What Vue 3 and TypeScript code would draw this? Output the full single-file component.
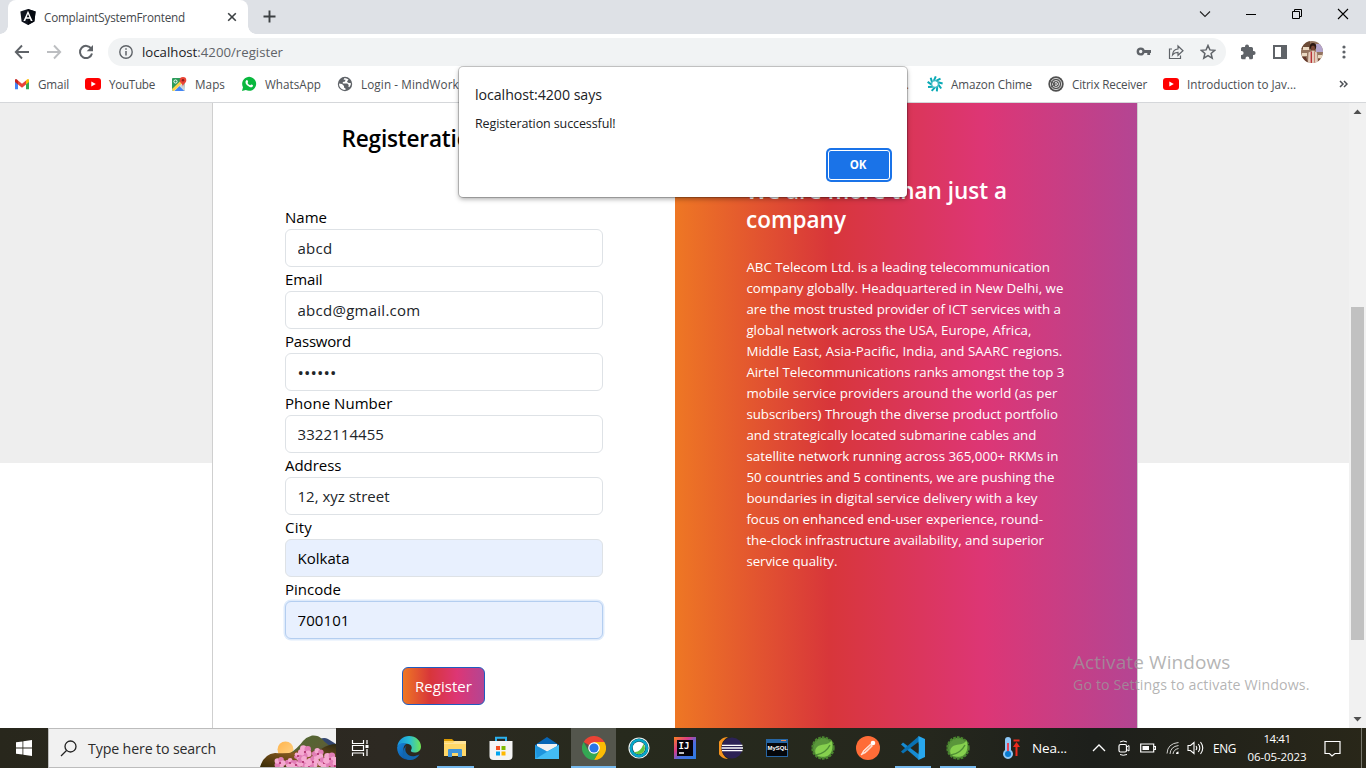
<script setup lang="ts">
import type { Directive } from 'vue'

/** Spreads the letters of a label or input value over the given width in pixels. */
const vFit: Directive<HTMLElement, number> = {
  mounted(el, binding) {
    let width: number
    let count: number
    if (el instanceof HTMLInputElement) {
      const ctx = document.createElement('canvas').getContext('2d')!
      const cs = getComputedStyle(el)
      ctx.font = `${cs.fontWeight} ${cs.fontSize} ${cs.fontFamily}`
      const shown = el.type === 'password' ? '•'.repeat(el.value.length) : el.value
      width = ctx.measureText(shown).width
      count = shown.length
    } else {
      width = el.getBoundingClientRect().width
      count = (el.textContent ?? '').length
    }
    el.style.letterSpacing = `${((binding.value - width) / count).toFixed(3)}px`
  },
}

interface Field {
  label: string
  labelWidth: number
  value: string
  width: number
  type?: string
  state?: string
}

const fields: Field[] = [
  { label: 'Name', labelWidth: 42, value: 'abcd', width: 35 },
  { label: 'Email', labelWidth: 37.5, value: 'abcd@gmail.com', width: 123 },
  { label: 'Password', labelWidth: 66, value: 'secret', width: 39, type: 'password' },
  { label: 'Phone Number', labelWidth: 107.5, value: '3322114455', width: 86.5 },
  { label: 'Address', labelWidth: 56.5, value: '12, xyz street', width: 92 },
  { label: 'City', labelWidth: 27, value: 'Kolkata', width: 52, state: 'filled' },
  { label: 'Pincode', labelWidth: 56, value: '700101', width: 52, state: 'filled focused' },
]

const about: [string, number][] = [
  ['ABC Telecom Ltd. is a leading telecommunication', 303.5],
  ['company globally. Headquartered in New Delhi, we', 317],
  ['are the most trusted provider of ICT services with a', 314.5],
  ['global network across the USA, Europe, Africa,', 285],
  ['Middle East, Asia-Pacific, India, and SAARC regions.', 316],
  ['Airtel Telecommunications ranks amongst the top 3', 318],
  ['mobile service providers around the world (as per', 311],
  ['subscribers) Through the diverse product portfolio', 311.5],
  ['and strategically located submarine cables and', 290],
  ['satellite network running across 365,000+ RKMs in', 312],
  ['50 countries and 5 continents, we are pushing the', 308],
  ['boundaries in digital service delivery with a key', 291],
  ['focus on enhanced end-user experience, round-', 296.5],
  ['the-clock infrastructure availability, and superior', 297.5],
  ['service quality.', 91],
]

/** Blossoms of the search box scene: centre x, centre y, radius. */
const blossoms: [number, number, number][] = [
  [20, 28, 6], [30, 28, 5], [36, 30, 5], [45, 17, 7], [38, 21, 4], [43, 27, 6],
  [53, 27, 6], [58, 19, 6], [64, 28, 6], [70, 24, 7], [49, 32, 5], [75, 31, 5],
]
</script>

<template>
  <div class="desktop">
    <header class="tabstrip">
      <div class="tab">
        <svg width="16" height="16" viewBox="0 0 16 16"><path d="M8 0l7.6 2.6-1.2 10L8 16l-6.4-3.4-1.2-10z" fill="#10151f" /><path d="M8 0l7.6 2.6-1.2 10L8 16z" fill="#050910" /><path d="M8 1.8L3.4 12h1.8l.9-2.3h3.8l.9 2.3h1.8zM6.7 8.2L8 5.1l1.3 3.1z" fill="#fff" /></svg>
        <span v-fit="141" class="tab-title">ComplaintSystemFrontend</span>
        <svg class="tab-close" width="10" height="10" viewBox="0 0 10 10"><path d="M1.200 1.200l7.600 7.600M8.800 1.200L1.200 8.800" stroke="#3c4043" stroke-width="1.600" /></svg>
      </div>
      <svg class="new-tab" width="13" height="13" viewBox="0 0 13 13"><path d="M6.5.5v12M.5 6.5h12" stroke="#3c4043" stroke-width="1.9" /></svg>
      <div class="window-buttons">
        <svg width="46" height="28" viewBox="0 0 46 28"><path d="M18 11.5l5 5 5-5" fill="none" stroke="#222" stroke-width="1.1" /></svg>
        <svg width="46" height="28" viewBox="0 0 46 28"><path d="M18 14.5h10" stroke="#000" /></svg>
        <svg width="46" height="28" viewBox="0 0 46 28"><path d="M18.500 11.500h7v7h-7zM20.500 11.500v-2h7v7h-2" fill="none" stroke="#000" /></svg>
        <svg width="46" height="28" viewBox="0 0 46 28"><path d="M18 9l10 10M28 9L18 19" stroke="#000" stroke-width="1.1" /></svg>
      </div>
    </header>

    <nav class="toolbar">
      <svg class="nav" width="16" height="16" viewBox="0 0 16 16"><path d="M15 8H2.500M8 1.500L1.800 8 8 14.500" fill="none" stroke="#5f6368" stroke-width="1.9" /></svg>
      <svg class="nav" width="16" height="16" viewBox="0 0 16 16"><path d="M1 8h12.500M8 1.500L14.200 8 8 14.500" fill="none" stroke="#bcbec1" stroke-width="1.9" /></svg>
      <svg class="nav" width="16" height="16" viewBox="0 0 16 16"><path d="M13.300 4.800A6.100 6.100 0 1 0 14 9.500" fill="none" stroke="#5f6368" stroke-width="2" /><path d="M15 1v6.300H8.700z" fill="#5f6368" /></svg>
      <div class="omnibox">
        <svg width="14" height="14" viewBox="0 0 14 14"><circle cx="7" cy="7" r="6.200" fill="none" stroke="#5f6368" stroke-width="1.400" /><path d="M7 6v4.500M7 3.300v1.500" stroke="#5f6368" stroke-width="1.500" /></svg>
        <span v-fit="141" class="url"><b>localhost</b>:4200/register</span>
        <svg class="key" width="16" height="16" viewBox="0 0 16 16"><circle cx="4.700" cy="7.500" r="2.900" fill="none" stroke="#5f6368" stroke-width="2.400" /><path d="M7.500 7.500h7.500M12.700 8v3" stroke="#5f6368" stroke-width="2.800" /></svg>
        <svg width="16" height="16" viewBox="0 0 16 16"><path d="M4 5H1.500v9.500h11V11.500" fill="none" stroke="#5f6368" stroke-width="1.200" /><path d="M4.500 11c.3-4 2.500-5.800 5.500-6V2l5 4.800-5 4.500V8.400C7.500 8.400 6 9 4.500 11z" fill="none" stroke="#5f6368" stroke-width="1.200" /></svg>
        <svg width="16" height="16" viewBox="0 0 16 16"><path d="M8 1.500l1.900 4.400 4.800.4-3.600 3.100 1.100 4.700L8 11.600l-4.200 2.500 1.100-4.700-3.600-3.100 4.800-.4z" fill="none" stroke="#5f6368" stroke-width="1.500" /></svg>
      </div>
      <svg class="puzzle" width="16" height="16" viewBox="0 0 16 16"><path d="M1 4.500q0-1.500 1.500-1.500H5V2.500a2 2 0 0 1 4 0V3h2.500Q13 3 13 4.500V7h.6a2 2 0 0 1 0 4H13v2.700q0 1.500-1.500 1.500H9.300v-.7a1.900 1.900 0 0 0-3.800 0v.7h-3Q1 15.200 1 13.700V11h.6a2 2 0 0 0 0-4H1z" fill="#5f6368" /></svg>
      <svg class="side" width="16" height="16" viewBox="0 0 16 16"><path d="M2 2h12v12H2z" fill="#fff" stroke="#5f6368" stroke-width="2" /><path d="M9 2h5v12H9z" fill="#5f6368" /></svg>
      <svg class="avatar" width="22" height="22" viewBox="0 0 22 22">
        <defs><clipPath id="avatar-clip"><circle cx="11" cy="11" r="11" /></clipPath></defs>
        <g clip-path="url(#avatar-clip)">
          <path d="M0 0h22v22H0z" fill="#94745f" /><path d="M0 0h9v8H0z" fill="#6b4a36" /><path d="M15 3h7v8h-7z" fill="#b4a5cd" /><path d="M2 6h6v3H2zM1 12h5v3H1zM17 14h5v3h-5z" fill="#ead8c1" />
          <ellipse cx="12" cy="5.500" rx="3.200" ry="3.500" fill="#2b1712" /><ellipse cx="12" cy="7" rx="2" ry="2.500" fill="#7c4735" /><path d="M7.500 11.500L12 9.500l4 2 1 11H7z" fill="#e3cdbd" /><path d="M10.300 10.500v12" stroke="#b72730" stroke-width="1.300" /><path d="M13.500 10.500v12" stroke="#c98072" stroke-width="1" /><path d="M0 16h5l2 6H0z" fill="#63372a" /><path d="M17 18h5v4h-5z" fill="#7c4a38" />
        </g>
      </svg>
      <svg class="dots" width="4" height="14" viewBox="0 0 4 14"><g fill="#5f6368"><circle cx="2" cy="2" r="1.600" /><circle cx="2" cy="7" r="1.600" /><circle cx="2" cy="12" r="1.600" /></g></svg>
    </nav>

    <div class="bookmarks">
      <div class="bookmark">
        <svg width="16" height="16" viewBox="0 0 16 16"><path d="M1 4.200v9h3V7z" fill="#4285f4" /><path d="M15 4.200v9h-3V7z" fill="#34a853" /><path d="M12 4.500l1.300-1.300Q15 2.500 15 4.500V6l-3 2.500z" fill="#fbbc04" /><path d="M4 4.500L2.700 3.200Q1 2.500 1 4.500V6l3 2.500z" fill="#c5221f" /><path d="M4 4.500l4 3.200 4-3.200v4l-4 3.200-4-3.200z" fill="#ea4335" /></svg>
        <span v-fit="31">Gmail</span>
      </div>
      <div class="bookmark">
        <svg width="16" height="16" viewBox="0 0 16 16"><rect y="2" width="16" height="12" rx="3" fill="#f00" /><path d="M6.300 5.400v5.200l4.500-2.600z" fill="#fff" /></svg>
        <span v-fit="46">YouTube</span>
      </div>
      <div class="bookmark">
        <svg width="16" height="16" viewBox="0 0 16 16"><rect x="1" y="2" width="13" height="13" rx="1" fill="#2c9c5b" /><path d="M1 14L13 3l1 11q0 1-1 1H2z" fill="#e5e8eb" /><path d="M3.500 15l5-5 5 5z" fill="#4285f4" /><path d="M1 13L12 2.500 13.500 5 3 15H2z" fill="#fdd24a" /><path d="M8.500 10l5 5V7z" fill="#cdd5db" /><circle cx="4.500" cy="5.500" r="1.600" fill="none" stroke="#fff" /><path d="M12 1a3.300 3.300 0 0 1 3.300 3.300C15.300 7 12.300 7.500 12 11c-.3-3.500-3.300-4-3.300-6.700A3.300 3.300 0 0 1 12 1z" fill="#e94335" /><circle cx="12" cy="4.300" r="1.200" fill="#8c1d18" /></svg>
        <span v-fit="30">Maps</span>
      </div>
      <div class="bookmark">
        <svg width="16" height="16" viewBox="0 0 16 16"><path d="M1 15l1-3.800A7 7 0 1 1 4.800 14z" fill="#09b83e" /><path d="M5.300 4.300q.9-.7 1.300.2l.5 1.200q.2.500-.6 1.200 1 1.800 2.700 2.400.8-1 1.200-.9l1.400.7q.5.500-.3 1.600-1 1-2.900.3Q5.500 9.700 4.600 7.200q-.5-1.900.7-2.900z" fill="#fff" /></svg>
        <span v-fit="56">WhatsApp</span>
      </div>
      <div class="bookmark login">
        <svg width="16" height="16" viewBox="0 0 16 16"><circle cx="8" cy="8" r="7.200" fill="#5f6368" /><path d="M2 7.500l3 .5 2 2v1.500l1.500 1v1.500Q4 14 2.300 10zM7.500 2l-1 1.800h2L8 5.500 5.800 6v1.500h4.500l1.500 1.500-.5 1.500 1 .8q1.700-1.700 1.700-4l-3-.5L10 5.500l1.500-2Q9.500 2 7.500 2z" fill="#fff" /></svg>
        <span v-fit="126">Login - MindWorkBook</span>
      </div>
      <div class="bookmark-group">
        <span class="rest">.</span>
        <div class="bookmark">
          <svg width="16" height="16" viewBox="0 0 16 16"><g fill="none" stroke="#08a9b5" stroke-width="2"><path v-for="n in 9" :key="n" d="M6.800 4.800L8.800.4" :transform="`rotate(${n * 40} 8 8)`" /></g><circle cx="8" cy="8" r="3.400" fill="none" stroke="#42bbc3" stroke-width="1.300" /></svg>
          <span v-fit="81">Amazon Chime</span>
        </div>
        <div class="bookmark">
          <svg width="16" height="16" viewBox="0 0 16 16"><circle cx="8" cy="8" r="7.700" fill="#505050" /><circle cx="8" cy="8" r="5.600" fill="none" stroke="#ddd" stroke-width=".9" /><circle cx="8" cy="8" r="3.500" fill="none" stroke="#eee" stroke-width=".9" /><circle cx="8" cy="8" r="1.400" fill="none" stroke="#fff" stroke-width=".9" /><path d="M1 5l6 3-5 4" fill="none" stroke="#505050" stroke-width="1" /></svg>
          <span v-fit="75">Citrix Receiver</span>
        </div>
        <div class="bookmark">
          <svg width="16" height="16" viewBox="0 0 16 16"><rect y="2" width="16" height="12" rx="3" fill="#f00" /><path d="M6.300 5.400v5.200l4.500-2.600z" fill="#fff" /></svg>
          <span v-fit="109">Introduction to Jav...</span>
        </div>
      </div>
      <svg class="more" width="9" height="8" viewBox="0 0 9 8"><path d="M1 1l3 3-3 3M5 1l3 3-3 3" fill="none" stroke="#4d5156" stroke-width="1.500" /></svg>
    </div>

    <main class="viewport">
      <div class="page">
        <section class="card">
          <div class="form-side">
            <h4 class="form-title"><span v-fit="205">Registeration Form</span></h4>
            <form class="form" @submit.prevent>
              <template v-for="f in fields" :key="f.label">
                <label><span v-fit="f.labelWidth">{{ f.label }}</span></label>
                <input v-fit="f.width" :class="f.state" :type="f.type ?? 'text'" :value="f.value" />
              </template>
              <button class="register" type="submit"><span v-fit="57">Register</span></button>
            </form>
          </div>
          <div class="about-side">
            <h4 class="about-title"><span v-fit="261">We are more than just a</span><br /><span v-fit="100">company</span></h4>
            <p class="about-text">
              <span v-for="[line, width] in about" :key="line" v-fit="width">{{ line }}</span>
            </p>
          </div>
        </section>
      </div>
      <div class="scrollbar">
        <svg width="17" height="17" viewBox="0 0 17 17"><path d="M4.500 11L8.500 6.500l4 4.500z" fill="#505050" /></svg>
        <div class="thumb"></div>
        <svg class="down" width="17" height="17" viewBox="0 0 17 17"><path d="M4.500 6l4 4.500 4-4.500z" fill="#505050" /></svg>
      </div>
    </main>

    <div class="dialog">
      <div class="dialog-title"><span v-fit="127">localhost:4200 says</span></div>
      <div class="dialog-text"><span v-fit="140.500">Registeration successful!</span></div>
      <button class="ok">OK</button>
    </div>

    <div class="watermark">
      <div class="wm-title"><span v-fit="157.500">Activate Windows</span></div>
      <div class="wm-text"><span v-fit="236.500">Go to Settings to activate Windows.</span></div>
    </div>

    <footer class="taskbar">
      <div class="start"><svg width="16" height="16" viewBox="0 0 16 16"><path d="M0 2.300l6.500-.9v6.200H0zM7.300 1.300L16 0v7.600H7.300zM0 8.400h6.500v6.200L0 13.700zM7.300 8.400H16V16l-8.700-1.200z" fill="#fff" /></svg></div>
      <div class="search">
        <svg width="17" height="17" viewBox="0 0 17 17"><circle cx="10.500" cy="6.500" r="5.500" fill="none" stroke="#222" stroke-width="1.300" /><path d="M6.500 10.500L1 16" stroke="#222" stroke-width="1.300" /></svg>
        <span v-fit="128">Type here to search</span>
        <svg class="scene" width="76" height="32" viewBox="0 0 76 32">
          <defs>
            <linearGradient id="sun" x1="0" y1="0" x2="1" y2="1"><stop offset="0" stop-color="#ffb44c" /><stop offset="1" stop-color="#ffd489" /></linearGradient>
            <linearGradient id="hill" x1="0" y1="0" x2="1" y2="1"><stop offset="0" stop-color="#4e6a33" /><stop offset=".5" stop-color="#5c6034" /><stop offset="1" stop-color="#2d3f66" /></linearGradient>
            <linearGradient id="ground" x1="0" y1="1" x2="1" y2="0"><stop offset="0" stop-color="#372b07" /><stop offset=".5" stop-color="#85581f" /><stop offset="1" stop-color="#2c2a12" /></linearGradient>
          </defs>
          <circle cx="25.500" cy="14.500" r="8" fill="url(#sun)" />
          <path d="M54 8q8-7 14-4l8 5v23H50z" fill="#33466f" />
          <path d="M29 19Q38 13 43 6 47 2 52 .6q6-.6 10 3.400 5 6 14 10v18H29z" fill="url(#hill)" />
          <path d="M0 32q4-13 15-14 12 1 19-1 9-5 17-1 6 0 10-2 8-5 15-5v23z" fill="url(#ground)" />
          <g v-for="([x, y, r], i) in blossoms" :key="i">
            <circle v-for="n in 5" :key="n" :cx="x + r * 0.55 * Math.cos(n * 1.257 + i)" :cy="y + r * 0.55 * Math.sin(n * 1.257 + i)" :r="r * 0.46" :fill="n % 2 ? '#f5a9d1' : '#e17db6'" />
            <circle :cx="x" :cy="y" r="1.100" fill="#b32f70" />
          </g>
        </svg>
      </div>
      <div class="apps">
        <div class="app view"><svg width="18" height="18" viewBox="0 0 18 18"><path d="M1.500 1v3.500h11V1M1.500 17v-3h11v3M1.500 6.500h11v5h-11zM16 1v4M16 10v7" fill="none" stroke="#fff" stroke-width="1.200" /><path d="M14.500 6h3v3h-3z" fill="#fff" /></svg></div>
        <div class="app"><svg width="24" height="24" viewBox="0 0 24 24">
          <defs><linearGradient id="edge-top"><stop offset="0" stop-color="#1892df" /><stop offset=".5" stop-color="#28bdd5" /><stop offset="1" stop-color="#70e554" /></linearGradient><linearGradient id="edge-bottom" x1="0" y1="0" x2="1" y2="1"><stop offset="0" stop-color="#1687da" /><stop offset="1" stop-color="#0b4b9b" /></linearGradient></defs>
          <path d="M.3 10.500C1 4.500 6 0 12 0c7 0 12 5 12 10.500 0 4-3 6-6.500 6-3 0-4-1.300-3.500-2.200 2-3 0-6.300-4-6.500C5.500 7.500 1.500 8 .3 10.500z" fill="url(#edge-top)" />
          <path d="M.2 11C1.500 7 6 6.300 9.500 7.800 6 9.500 5.500 15 8 19c1.500 2.500 4 4 7 4.500-7.500 2-15.500-3.500-14.800-12.500z" fill="url(#edge-bottom)" />
          <path d="M9.500 9.500c-3.500 5 1 12 8.500 10.500 2-.4 3.500-1.300 4.500-1.500-2 3.500-5.500 5.500-9.500 5.500-7-.5-10-8-3.500-14.500z" fill="#1266ae" />
        </svg></div>
        <div class="app running"><svg width="24" height="22" viewBox="0 0 24 22"><path d="M1 2h8l2 2h-10z" fill="#d99800" /><path d="M1 4h22v15H1z" fill="#ffd768" /><path d="M1 6h9l2-2h11v3H1z" fill="#ffe398" /><path d="M5 20v-7q0-1 1-1h12q1 0 1 1v7h-4v-4H9v4z" fill="#4094d9" /></svg></div>
        <div class="app"><svg width="24" height="24" viewBox="0 0 24 24"><path d="M7 6V1.800h10V6" fill="none" stroke="#2bb1ee" stroke-width="2" /><path d="M.5 5h23v15q0 4-4 4h-15q-4 0-4-4z" fill="#f4f4f4" /><path d="M7 10h4v4H7z" fill="#f25022" /><path d="M12.500 10h4v4h-4z" fill="#7fba00" /><path d="M7 15.500h4v4H7z" fill="#00a4ef" /><path d="M12.500 15.500h4v4h-4z" fill="#ffb900" /></svg></div>
        <div class="app"><svg width="24" height="22" viewBox="0 0 24 22"><path d="M0 8L12 0l12 8v3H0z" fill="#0866b5" /><path d="M2 7h20v7l-10 4-10-4z" fill="#f2f2f2" /><path d="M0 8l12 6.500L24 8v14H0z" fill="#28a5ea" /><path d="M0 22L24 8v14z" fill="#43bcf4" /><path d="M0 8l12 6.500L2 21z" fill="#1687d2" opacity=".55" /></svg></div>
        <div class="app running active"><svg width="24" height="24" viewBox="0 0 24 24"><path d="M12 12L1.600 6A12 12 0 0 1 22.400 6z" fill="#ea4335" /><path d="M12 12V6h10.400A12 12 0 0 1 12 24l5.200-9z" fill="#fbbc05" /><path d="M12 12l5.200 3L12 24A12 12 0 0 1 1.600 6l5.200 9z" fill="#34a853" /><circle cx="12" cy="12" r="5.800" fill="#fff" /><circle cx="12" cy="12" r="4.600" fill="#2875e8" /></svg></div>
        <div class="app"><svg width="22" height="22" viewBox="0 0 22 22"><circle cx="11" cy="11" r="10" fill="#164551" stroke="#e8f2f2" stroke-width="1.200" /><circle cx="11" cy="11" r="8" fill="none" stroke="#05a8cb" stroke-width="2.500" /><circle cx="11" cy="11" r="6.200" fill="#fff" /><path d="M15.500 7A6 6 0 0 1 6 15q6 1 9.500-8z" fill="#62c63f" /></svg></div>
        <div class="app"><svg width="22" height="22" viewBox="0 0 22 22">
          <defs><linearGradient id="idea" x1="0" y1="0" x2="1" y2="1"><stop offset="0" stop-color="#fc801d" /><stop offset=".35" stop-color="#d83b8a" /><stop offset=".6" stop-color="#4a6ee0" /><stop offset="1" stop-color="#2b7ce1" /></linearGradient></defs>
          <path d="M0 0h22v22H0z" fill="url(#idea)" /><path d="M3 3h16v16H3z" fill="#070309" /><text x="4.500" y="11.500" class="ij">IJ</text><path d="M5 16h5" stroke="#fff" stroke-width="1.500" />
        </svg></div>
        <div class="app"><svg width="24" height="24" viewBox="0 0 24 24"><path d="M9 1A11 11 0 0 0 9 23 12.500 12.500 0 0 1 9 1z" fill="#f7941e" /><circle cx="13" cy="12" r="10.500" fill="#2c2255" /><path d="M3 9.300h20.500M2.500 12h21.500M3 14.700h20.500" stroke="#fff" stroke-width="1.300" /></svg></div>
        <div class="app"><svg width="22" height="18" viewBox="0 0 22 18"><path d="M0 0h22v18H0z" fill="#2766a4" /><path d="M1 4h20v13H1z" fill="#05070b" /><path d="M15 1.500h5" stroke="#e08d5d" /><text x="1.500" y="10.500" class="sql">MySQL</text></svg></div>
        <div class="app tight"><svg width="24" height="24" viewBox="0 0 24 24"><circle cx="12" cy="12" r="10.500" fill="#5a963b" stroke="#4a852f" stroke-width="2.400" stroke-dasharray="2.600 1.100" /><path d="M20.500 4c2 7 1 15-6 16.500-4.500 1-9-.5-10-3C3 11 8 9 13 8.500c4-.5 6-1.500 7.500-4.500z" fill="#86d04e" /><path d="M5 19c6-1 11-4 14-10" fill="none" stroke="#4f8e35" stroke-width="1.400" /></svg></div>
        <div class="app tight"><svg width="24" height="24" viewBox="0 0 24 24"><circle cx="12" cy="12" r="12" fill="#ff6c37" /><path d="M5 19l2.500-4.500 7-6.500 2 2-6.500 6.500z" fill="#ffd9ca" stroke="#fff" stroke-width=".6" /><path d="M8 16l7-6.500" stroke="#ff6c37" stroke-width=".7" /><circle cx="17" cy="7" r="2.300" fill="#fff" /></svg></div>
        <div class="app tight running"><svg width="24" height="24" viewBox="0 0 24 24"><path d="M0 8.500l2-2L18 18.500V24z" fill="#168bd2" /><path d="M0 15.500l2 2L18 5.500V0z" fill="#0971b3" /><path d="M17.500 0L24 3v18l-6.500 3z" fill="#28a7ed" /><path d="M17.500 7.500v9L11.500 12z" fill="#26271e" /></svg></div>
        <div class="app tight running"><svg width="24" height="24" viewBox="0 0 24 24"><circle cx="12" cy="12" r="10.500" fill="#5a963b" stroke="#4a852f" stroke-width="2.400" stroke-dasharray="2.600 1.100" /><path d="M20.500 4c2 7 1 15-6 16.500-4.500 1-9-.5-10-3C3 11 8 9 13 8.500c4-.5 6-1.500 7.500-4.500z" fill="#86d04e" /><path d="M5 19c6-1 11-4 14-10" fill="none" stroke="#4f8e35" stroke-width="1.400" /></svg></div>
      </div>
      <div class="tray">
        <svg width="18" height="22" viewBox="0 0 18 22"><path d="M3 13V3a3 3 0 0 1 6 0v10a5 5 0 1 1-6 0z" fill="#8dc8f7" /><path d="M6 6v11" stroke="#e7445a" stroke-width="2" /><circle cx="6" cy="17" r="3" fill="#087bd0" /><path d="M14.500 19V8M11.500 3.500h6" stroke="#ed2b1d" stroke-width="2" /><path d="M14.500 5l3.500 5h-7z" fill="#ed2b1d" /></svg>
        <span v-fit="35" class="weather">Nea...</span>
        <svg class="chevron" width="14" height="8" viewBox="0 0 14 8"><path d="M1 7l6-6 6 6" fill="none" stroke="#fff" stroke-width="1.300" /></svg>
        <svg class="camera" width="12" height="16" viewBox="0 0 12 16"><rect x="1" y="4.500" width="7.500" height="7.500" rx="1.500" fill="none" stroke="#fff" stroke-width="1.200" /><path d="M8.500 7l2.500-1.500v5.500L8.500 9.500M2 2q3-2 7 0M2 14.500q3 1.500 7 0" fill="none" stroke="#fff" /></svg>
        <svg class="battery" width="16" height="10" viewBox="0 0 16 10"><path d="M.7 1h13v8H.7zM14 3.500h1.500v3H14" fill="none" stroke="#fff" stroke-width="1.200" /><path d="M2.500 3H9v4H2.500z" fill="#fff" /></svg>
        <svg class="wifi" width="14" height="14" viewBox="0 0 14 14"><g fill="none" stroke="#d4d4d1"><path d="M1 12.500Q1.500 2.500 12.500 1.500M4 13q.5-7.500 8.500-8.500M7 13q.5-4.500 5.500-5.500" /></g><path d="M10 13q0-2.500 2.500-2.500V13z" fill="#fff" /></svg>
        <svg class="volume" width="17" height="14" viewBox="0 0 17 14"><path d="M1 4.500h2.500L7 1.500v11L3.500 9.500H1z" fill="none" stroke="#fff" stroke-width="1.100" /><path d="M9 5q1.500 2 0 4M11.300 3q3 4 0 8M13.500 1q4.500 6 0 12" fill="none" stroke="#fff" stroke-width="1.100" /></svg>
        <span v-fit="23" class="lang">ENG</span>
        <div class="clock"><span v-fit="27">14:41</span><span v-fit="59">06-05-2023</span></div>
        <svg class="notify" width="17" height="17" viewBox="0 0 17 17"><path d="M1 1.500h15v12h-5L8 16l-2.500-2.500H1z" fill="none" stroke="#fff" stroke-width="1.200" /></svg>
        <div class="show-desktop"></div>
      </div>
    </footer>
  </div>
</template>

<style>
html,
body {
  margin: 0;
  overflow: hidden;
}
</style>

<style scoped>
* { box-sizing: border-box; }
.desktop {
  position: relative;
  display: flex;
  flex-direction: column;
  width: 1366px;
  height: 768px;
  overflow: hidden;
  background: #fff;
  font-family: "Open Sans", "Noto Sans", sans-serif;
}
svg { display: block; flex: none; }
span { display: inline-block; white-space: nowrap; flex: none; }

.tabstrip { display: flex; height: 34px; flex: none; background: #dee1e6; }
.tab {
  position: relative;
  display: flex;
  align-items: center;
  width: 240px;
  margin-left: 8px;
  padding: 0 11px 0 12px;
  background: #fff;
  border-radius: 8px 8px 0 0;
}
.tab::before, .tab::after {
  content: "";
  position: absolute;
  bottom: 0;
  width: 8px;
  height: 8px;
}
.tab::before { left: -8px; background: radial-gradient(circle at 0 0, transparent 7.5px, #fff 8px); }
.tab::after { right: -8px; background: radial-gradient(circle at 100% 0, transparent 7.5px, #fff 8px); }
.tab-title { margin-left: 8px; color: #45484c; font-size: 11.700px; line-height: 16px; margin-top: -1px; }
.tab-close { margin-left: auto; }
.new-tab { margin: 10px 0 0 15px; }
.window-buttons { display: flex; margin-left: auto; }

.toolbar { display: flex; align-items: center; height: 36px; flex: none; padding-left: 14px; }
.nav { margin-right: 16px; }
.omnibox {
  display: flex;
  align-items: center;
  width: 1118px;
  height: 28px;
  margin-left: -2px;
  padding: 0 10px 0 11px;
  border-radius: 14px;
  background: #f1f3f4;
}
.url { margin-left: 9px; font-size: 13.200px; color: #5f6368; }
.url b { font-weight: 400; color: #202124; }
.key { margin-left: auto; }
.omnibox svg + svg { margin-left: 16px; }
.puzzle { margin-left: 14px; }
.side { margin-left: 16px; }
.avatar { margin-left: 13px; }
.dots { margin-left: 19px; }

.bookmarks {
  display: flex;
  align-items: center;
  height: 33px;
  flex: none;
  padding: 0 18px 5px 14px;
  border-bottom: 1px solid #d5d7da;
  font-size: 11.700px;
  line-height: 16px;
  color: #4b4e52;
}
.bookmark { display: flex; align-items: center; gap: 8px; margin-right: 16px; flex: none; }
.login { width: 134px; }
.bookmark-group { display: flex; align-items: center; margin-left: auto; }
.rest { width: 21px; color: #c57a3b; }
.more { margin-left: 27px; }

.viewport { display: flex; height: 625px; flex: none; }
.page {
  display: flex;
  flex: 1;
  padding-left: 212px;
  background: linear-gradient(#eee 360px, #fff 360px);
}
.card { display: flex; width: 926px; border: solid #cfcfcf; border-width: 0 1px; background: #fff; }
.form-side { width: 462px; padding: 20px 72px 0; }
.form-title { margin: 0; text-align: center; color: #000; font-size: 22.600px; line-height: 32px; font-weight: 600; }
.form { display: flex; flex-direction: column; margin-top: 50px; }
label { height: 24px; font-size: 15px; line-height: 24px; color: #000; }
input {
  width: 318px;
  height: 38px;
  padding: 0 11.500px;
  border: 1px solid #dee2e6;
  border-radius: 6px;
  outline: 0;
  background: #fff;
  color: #212529;
  font-family: inherit;
  font-size: 15px;
}
input[type="password"] { font-size: 17px; }
input.filled { background: #e8f0fe; color: #000; }
input.focused { border-color: #b4cef0; box-shadow: 0 0 0 1.500px #dfebfb; }
.register {
  width: 83px;
  height: 38px;
  margin: 28px 0 0 117px;
  padding: 0;
  border: 1px solid #1f5cc0;
  border-radius: 6px;
  background: linear-gradient(to right, #ee7724, #d8363a, #dd3675, #b44593);
  color: #fff;
  font: 15px "Open Sans", sans-serif;
}
.about-side {
  flex: 1;
  padding: 74px 0 0 71px;
  color: #fff;
  background: linear-gradient(to right, #ee7724, #d8363a, #dd3675, #b44593);
}
.about-title { margin: 0; font-size: 22.500px; font-weight: 600; line-height: 28.800px; }
.about-text { display: flex; flex-direction: column; align-items: flex-start; margin: 22px 0 0 .4px; font-size: 13.300px; line-height: 21px; }

.scrollbar { display: flex; flex-direction: column; width: 17px; background: #f1f1f1; }
.thumb { width: 13px; height: 333px; margin: 187px 0 0 2px; background: #c1c1c1; }
.down { margin-top: auto; }

.dialog {
  position: absolute;
  left: 459px;
  top: 67px;
  width: 448px;
  height: 130px;
  padding: 17px 16px;
  border-radius: 4px;
  background: #fff;
  box-shadow: 0 0 0 1px rgba(0, 0, 0, 0.2), 0 2px 5px rgba(0, 0, 0, 0.35);
  color: #202124;
}
.dialog-title { height: 22px; font-size: 14.200px; line-height: 22px; }
.dialog-text { height: 20px; margin-top: 8px; font-size: 12.500px; line-height: 20px; }
.ok {
  display: block;
  width: 62px;
  height: 30px;
  margin: 16px 1px 0 auto;
  padding: 0 2px 2px 0;
  border: 1px solid #fff;
  border-radius: 3px;
  background: #1a73e8;
  box-shadow: 0 0 0 2px #1a73e8;
  color: #fff;
  font: 700 11.500px "Open Sans", sans-serif;
  letter-spacing: -0.2px;
}

.watermark { position: absolute; left: 1073px; top: 649px; color: rgba(155, 155, 155, 0.75); }
.wm-title { height: 26px; font-size: 19px; line-height: 26px; }
.wm-text { height: 20px; font-size: 14.200px; line-height: 20px; }

.taskbar {
  display: flex;
  height: 40px;
  flex: none;
  background: linear-gradient(to right, #28271c, #2d2922 28%, #272a1d 45%, #25271d 68%, #1d1f1b 80%, #292719);
}
.start { display: flex; align-items: center; justify-content: center; width: 48px; }
.search {
  display: flex;
  align-items: center;
  width: 288px;
  padding-left: 11px;
  border: 1px solid #bcbcbc;
  border-right: 0;
  background: #f1f1f1;
  color: #2c2c2c;
  font-size: 14.200px;
}
.search > span { margin-left: 11px; }
.scene { margin-left: auto; align-self: flex-end; }
.apps { display: flex; }
.app { position: relative; display: flex; align-items: center; justify-content: center; width: 46px; }
.app.view { width: 50px; padding-right: 3px; }
.app.tight { width: 45px; }
.running::after {
  content: "";
  position: absolute;
  left: 5px;
  right: 4px;
  bottom: 0;
  height: 2px;
  background: #76b9ed;
}
.app.active { width: 45px; margin-left: 1px; background: #54564d; }
.active::after { left: 0; right: 0; }
.ij { font: 700 9px "DejaVu Sans Mono", monospace; fill: #fff; }
.sql { font: 700 6px "Liberation Sans", sans-serif; fill: #fff; }

.tray { display: flex; align-items: center; margin-left: auto; width: 364px; color: #fff; }
.weather { margin-left: 12px; font-size: 13.500px; }
.chevron { margin-left: 25px; }
.camera { margin-left: 12px; }
.battery { margin-left: 10px; }
.wifi { margin-left: 10px; }
.volume { margin-left: 7px; }
.lang { margin-left: 9px; font-size: 11.800px; line-height: 16px; margin-top: -1px; }
.clock { display: flex; flex-direction: column; align-items: center; width: 60px; margin-left: 11px; font-size: 11.500px; line-height: 18px; }
.notify { margin-left: 17px; }
.show-desktop { width: 1px; height: 40px; margin-left: 20px; background: #77776d; }
</style>
